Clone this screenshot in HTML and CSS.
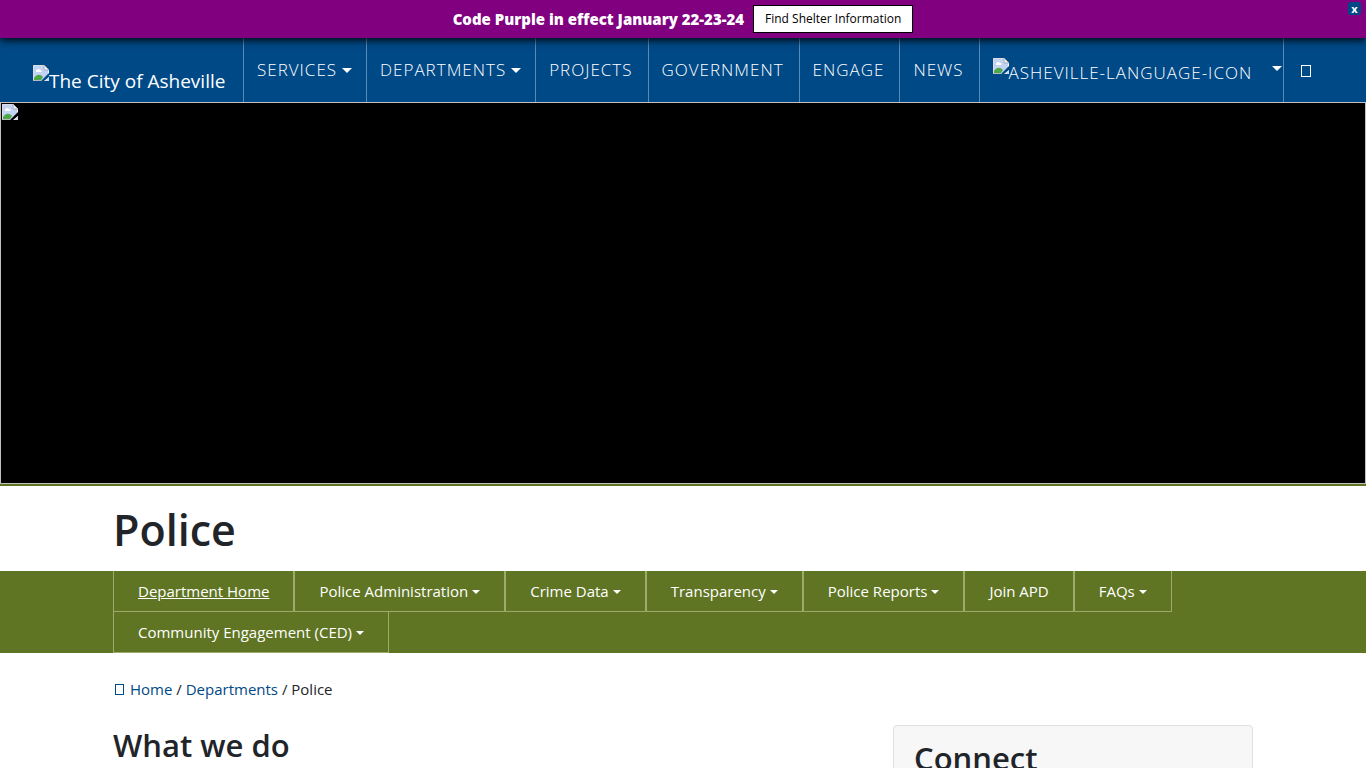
FILE: index.html
```html
<!DOCTYPE html>
<html lang="en">
<head>
<meta charset="utf-8">
<meta name="viewport" content="width=device-width, initial-scale=1">
<title>Police - The City of Asheville</title>
<link rel="stylesheet" href="styles.css">
</head>
<body>
<svg class="defs" aria-hidden="true">
  <symbol id="missing" viewBox="0 0 16 16">
    <path d="M0 0h11l5 5v11H0z" fill="#fff"/>
    <path d="M1 1h10v4h4v5l-4 5H1z" fill="#c3d3f3"/>
    <path d="M3 6c0-2 3-3 4-1 2 0 2 2 1 2H3z" fill="#fff"/>
    <path d="M1 15v-2c3-4 6-4 9-1l-2 3z" fill="#4fa846"/>
    <path d="M11 0v5h5z" fill="#eef1f6" stroke="#a8adb8" stroke-width="1"/>
    <path d="M0 16V0h11M0 15.500h8" fill="none" stroke="#b4b9c4" stroke-width="1"/>
    <path d="M16 8L8 16h3l5-4z" class="tear"/>
    <path d="M16 12v4h-4z" fill="#d5dbe8"/>
  </symbol>
</svg>

<aside class="alert">
  <strong class="alert-text">Code Purple in effect January 22-23-24</strong>
  <a class="alert-link" href="#">Find Shelter Information</a>
  <button class="alert-close" type="button" aria-label="Close alert">x</button>
</aside>

<header class="site-header">
  <a class="brand" href="#"><svg class="missing"><use href="#missing"/></svg><span>The City of Asheville</span></a>
  <nav class="main-nav" aria-label="Main">
    <a class="nav-item has-menu" href="#">Services</a>
    <a class="nav-item has-menu" href="#">Departments</a>
    <a class="nav-item" href="#">Projects</a>
    <a class="nav-item" href="#">Government</a>
    <a class="nav-item" href="#">Engage</a>
    <a class="nav-item" href="#">News</a>
    <a class="nav-item has-menu language" href="#"><svg class="missing"><use href="#missing"/></svg><span class="language-name">asheville-language-icon</span></a>
    <a class="nav-item search" href="#" aria-label="Search"><span class="glyph"></span></a>
  </nav>
</header>

<div class="hero"><svg class="missing"><use href="#missing"/></svg></div>

<div class="container"><h1 class="page-title">Police</h1></div>

<nav class="dept-nav" aria-label="Department">
  <div class="container dept-list">
    <a class="dept-item current" href="#">Department Home</a>
    <a class="dept-item has-menu" href="#">Police Administration</a>
    <a class="dept-item has-menu" href="#">Crime Data</a>
    <a class="dept-item has-menu" href="#">Transparency</a>
    <a class="dept-item has-menu" href="#">Police Reports</a>
    <a class="dept-item" href="#">Join APD</a>
    <a class="dept-item has-menu" href="#">FAQs</a>
    <a class="dept-item has-menu" href="#">Community Engagement (CED)</a>
  </div>
</nav>

<div class="container">
  <nav class="breadcrumb" aria-label="Breadcrumb">
    <a href="#"><span class="glyph"></span>Home</a> / <a href="#">Departments</a> / <span>Police</span>
  </nav>
  <div class="columns">
    <main><h2>What we do</h2></main>
    <aside class="card"><h2>Connect</h2></aside>
  </div>
</div>
</body>
</html>
```
FILE: styles.css
```css
* { box-sizing: border-box; }

html { overflow: hidden; }

body {
  margin: 0;
  background: #fff;
  color: #212529;
  font-family: "Segoe UI", "Open Sans", "Noto Sans", sans-serif;
  font-size: 15px;
  line-height: 24px;
}

a { color: #004987; text-decoration: none; }

h1, h2 { margin: 0; font-weight: 600; }

.defs { display: none; }

.missing {
  flex: none;
  width: 16px;
  height: 16px;
  fill: #004987;
}

.container {
  width: 100%;
  max-width: 1140px;
  margin: 0 auto;
}

.glyph {
  display: inline-block;
  width: 9px;
  height: 11px;
  border: 1px solid currentColor;
}

.has-menu::after {
  content: "";
  display: inline-block;
  margin-left: 4px;
  border: 4px solid transparent;
  border-top-color: currentColor;
  border-bottom: 0;
  vertical-align: 3px;
}

.alert {
  position: relative;
  z-index: 1;
  display: flex;
  align-items: center;
  justify-content: center;
  gap: 9px;
  height: 38px;
  background: #800080;
  box-shadow: 0 2px 8px #000;
  color: #fff;
}

.alert-text { font-weight: 800; font-size: 15px; }

.alert-link {
  padding: 3px 11px;
  border: 1px solid #000;
  background: #fff;
  color: #000;
  font-size: 12px;
  line-height: 20px;
}

.alert-close {
  position: absolute;
  top: 2px;
  right: 5px;
  width: 13px;
  height: 13px;
  padding: 0;
  border: 0;
  border-radius: 3px;
  background: #004987;
  color: #fff;
  font: bold 11px/12px "Open Sans", sans-serif;
}

.site-header {
  display: flex;
  height: 64px;
  padding-left: 33px;
  background: #004987;
}

.brand {
  display: flex;
  flex: 0 0 192px;
  margin-right: 18px;
  padding-top: 27px;
  overflow: hidden;
  color: #fff;
  font-size: 19px;
  line-height: 32px;
  white-space: nowrap;
}

.main-nav { display: flex; }

.nav-item {
  padding: 20px 15px 0 13px;
  border-left: 1px solid #5c8ab0;
  color: #fff;
  font-size: 17px;
  font-weight: 300;
  letter-spacing: 1px;
  text-transform: uppercase;
  white-space: nowrap;
}

.nav-item.has-menu::after { margin-left: 5px; border-width: 5px 5px 0; }

.nav-item:nth-child(-n+2) { padding-right: 14px; }

.nav-item.language { display: flex; padding-right: 1px; }

.language-name { padding-top: 3px; }

.nav-item.language::after { margin: 8px 0 0 20px; align-self: flex-start; }

.nav-item.search { padding: 21px 17px 0; }

.search .glyph { width: 10px; height: 12px; }

.hero {
  height: 384px;
  padding: 2px;
  border-bottom: 2px solid #5f7523;
  background: #000;
  box-shadow: inset 0 0 0 1px #c0c0c0;
}

.hero .missing { display: block; fill: #000; }

.page-title {
  padding: 14px 0 11px;
  font-size: 43px;
  line-height: 60px;
}

.dept-nav { background: #5f7523; }

.dept-list { display: flex; flex-wrap: wrap; }

.dept-item {
  padding: 8px 24px;
  border: 1px solid #9bab6c;
  border-top: 0;
  color: #fff;
}

.current { text-decoration: underline; }

.breadcrumb { padding: 24px 0; }

.breadcrumb .glyph { margin: 0 6px 0 2px; }

.columns { display: flex; justify-content: space-between; }

h2 { font-size: 31px; line-height: 40px; }

.card {
  width: 360px;
  padding: 12px 20px;
  border: 1px solid #dfdfdf;
  border-radius: 4px;
  background: #f7f7f7;
}
```
